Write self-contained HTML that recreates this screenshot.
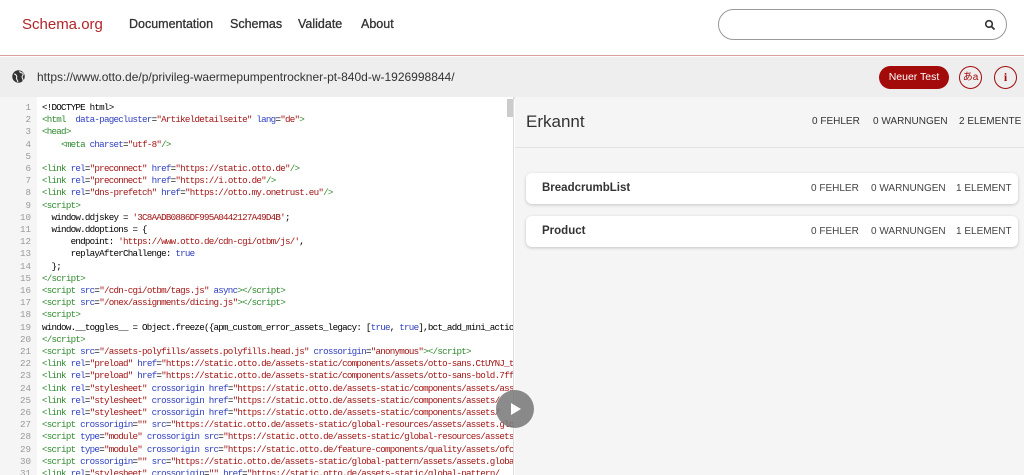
<!DOCTYPE html>
<html><head><style>
*{margin:0;padding:0;box-sizing:border-box}
body{width:1024px;height:475px;overflow:hidden;font-family:"Liberation Sans",sans-serif;background:#fff;position:relative}
.hdr{position:absolute;left:0;top:0;width:1024px;height:56px;background:#fff;border-bottom:1.5px solid #d9a0a0}
.logo{position:absolute;left:22px;top:16px;font-size:15px;color:#b1242a}
.nav{position:absolute;top:17px;font-size:12.5px;color:#333;-webkit-text-stroke:0.3px #333}
.search{position:absolute;left:718px;top:9px;width:289px;height:31px;border:1px solid #999;border-radius:16px}
.urlbar{position:absolute;left:0;top:57px;width:1024px;height:40px;background:#eeeeee;box-shadow:0 2px 3px rgba(0,0,0,.15)}
.url{position:absolute;left:37px;top:13px;font-size:12px;color:#333}
.btn{position:absolute;left:879px;top:66px;width:70px;height:23px;border-radius:12px;background:#a30b0b;color:#fff;font-size:10.5px;text-align:center;line-height:23px}
.circ{position:absolute;top:66px;width:23px;height:23px;border:1.3px solid #a30b0b;border-radius:50%;color:#a30b0b;font-size:10px;text-align:center;line-height:21px}
.code{position:absolute;left:0;top:97px;width:514px;height:378px;background:#fff;overflow:hidden;border-right:1px solid #ddd}
.gut{position:absolute;left:0;top:0;width:37px;height:378px;background:#f5f5f5}
.lines{position:absolute;left:0;top:5px;font-family:"Liberation Mono",monospace;font-size:9.2px;letter-spacing:-0.75px;line-height:12.2px;white-space:pre}
.ln{display:inline-block;width:31px;text-align:right;color:#999;margin-right:11px;letter-spacing:0}
.t{color:#2f8a2f}.a{color:#3040c0}.s{color:#a31515}.k{color:#3040c0}
.sb{position:absolute;left:507px;top:2px;width:6px;height:18px;background:#ccc}
.play{position:absolute;left:496px;top:390px;width:38px;height:38px;border-radius:50%;background:#777;opacity:.85}
.right{position:absolute;left:515px;top:97px;width:509px;height:378px;background:#f5f5f5}
.rh{position:absolute;left:0;top:0;width:509px;height:51px;border-bottom:1px solid #e2e2e2}
.card{position:absolute;left:11px;width:492px;height:31px;background:#fff;border-radius:6px;box-shadow:0 1px 3px rgba(0,0,0,.2)}
.ct{position:absolute;left:16px;top:9px;font-size:11.5px;font-weight:bold;color:#333}
.st{position:absolute;top:10px;font-size:10px;color:#444}
</style></head><body>
<div class="hdr">
<div class="logo">Schema.org</div>
<div class="nav" style="left:129px">Documentation</div>
<div class="nav" style="left:230px">Schemas</div>
<div class="nav" style="left:298px">Validate</div>
<div class="nav" style="left:361px">About</div>
<div class="search"><svg style="position:absolute;left:265px;top:9px" width="12" height="12" viewBox="0 0 12 12"><circle cx="5" cy="5" r="3.3" fill="none" stroke="#333" stroke-width="1.6"/><path d="M7.5 7.5L10.5 10.5" stroke="#333" stroke-width="1.8"/></svg></div>
</div>
<div class="urlbar">
<svg style="position:absolute;left:11px;top:12px" width="15" height="15" viewBox="0 0 24 24"><circle cx="12" cy="12" r="10" fill="#333"/><path d="M5 8c2 0 3 1 4 3s-1 3 0 5 2 3 2 5M14 3c0 2 1 3 3 3s3 2 2 4-2 2-1 4 2 3 1 5" fill="none" stroke="#eee" stroke-width="1.8"/></svg>
<div class="url">https://www.otto.de/p/privileg-waermepumpentrockner-pt-840d-w-1926998844/</div>
</div>
<div class="btn">Neuer Test</div>
<div class="circ" style="left:959px">あa</div>
<div class="circ" style="left:994px;font-weight:bold;font-family:'Liberation Serif',serif;font-size:12px">i</div>
<div class="code"><div class="gut"></div><div class="sb"></div>
<div class="lines"><span class="ln">1</span>&lt;!DOCTYPE html&gt;
<span class="ln">2</span><span class="t">&lt;html</span>  <span class="a">data-pagecluster</span>=<span class="s">"Artikeldetailseite"</span> <span class="a">lang</span>=<span class="s">"de"</span><span class="t">&gt;</span>
<span class="ln">3</span><span class="t">&lt;head&gt;</span>
<span class="ln">4</span>    <span class="t">&lt;meta</span> <span class="a">charset</span>=<span class="s">"utf-8"</span><span class="t">/&gt;</span>
<span class="ln">5</span>
<span class="ln">6</span><span class="t">&lt;link</span> <span class="a">rel</span>=<span class="s">"preconnect"</span> <span class="a">href</span>=<span class="s">"https://static.otto.de"</span><span class="t">/&gt;</span>
<span class="ln">7</span><span class="t">&lt;link</span> <span class="a">rel</span>=<span class="s">"preconnect"</span> <span class="a">href</span>=<span class="s">"https://i.otto.de"</span><span class="t">/&gt;</span>
<span class="ln">8</span><span class="t">&lt;link</span> <span class="a">rel</span>=<span class="s">"dns-prefetch"</span> <span class="a">href</span>=<span class="s">"https://otto.my.onetrust.eu"</span><span class="t">/&gt;</span>
<span class="ln">9</span><span class="t">&lt;script&gt;</span>
<span class="ln">10</span>  window.ddjskey = <span class="s">'3C8AADB0886DF995A0442127A49D4B'</span>;
<span class="ln">11</span>  window.ddoptions = {
<span class="ln">12</span>      endpoint: <span class="s">'https://www.otto.de/cdn-cgi/otbm/js/'</span>,
<span class="ln">13</span>      replayAfterChallenge: <span class="k">true</span>
<span class="ln">14</span>  };
<span class="ln">15</span><span class="t">&lt;/script&gt;</span>
<span class="ln">16</span><span class="t">&lt;script</span> <span class="a">src</span>=<span class="s">"/cdn-cgi/otbm/tags.js"</span> <span class="a">async</span><span class="t">&gt;&lt;/script&gt;</span>
<span class="ln">17</span><span class="t">&lt;script</span> <span class="a">src</span>=<span class="s">"/onex/assignments/dicing.js"</span><span class="t">&gt;&lt;/script&gt;</span>
<span class="ln">18</span><span class="t">&lt;script&gt;</span>
<span class="ln">19</span>window.__toggles__ = Object.freeze({apm_custom_error_assets_legacy: [<span class="k">true</span>, <span class="k">true</span>],bct_add_mini_action
<span class="ln">20</span><span class="t">&lt;/script&gt;</span>
<span class="ln">21</span><span class="t">&lt;script</span> <span class="a">src</span>=<span class="s">"/assets-polyfills/assets.polyfills.head.js"</span> <span class="a">crossorigin</span>=<span class="s">"anonymous"</span><span class="t">&gt;&lt;/script&gt;</span>
<span class="ln">22</span><span class="t">&lt;link</span> <span class="a">rel</span>=<span class="s">"preload"</span> <span class="a">href</span>=<span class="s">"https://static.otto.de/assets-static/components/assets/otto-sans.CtUYNJ_t</span>
<span class="ln">23</span><span class="t">&lt;link</span> <span class="a">rel</span>=<span class="s">"preload"</span> <span class="a">href</span>=<span class="s">"https://static.otto.de/assets-static/components/assets/otto-sans-bold.7ff</span>
<span class="ln">24</span><span class="t">&lt;link</span> <span class="a">rel</span>=<span class="s">"stylesheet"</span> <span class="a">crossorigin</span> <span class="a">href</span>=<span class="s">"https://static.otto.de/assets-static/components/assets/ass</span>
<span class="ln">25</span><span class="t">&lt;link</span> <span class="a">rel</span>=<span class="s">"stylesheet"</span> <span class="a">crossorigin</span> <span class="a">href</span>=<span class="s">"https://static.otto.de/assets-static/components/assets/</span>
<span class="ln">26</span><span class="t">&lt;link</span> <span class="a">rel</span>=<span class="s">"stylesheet"</span> <span class="a">crossorigin</span> <span class="a">href</span>=<span class="s">"https://static.otto.de/assets-static/components/assets/</span>
<span class="ln">27</span><span class="t">&lt;script</span> <span class="a">crossorigin</span>=<span class="s">""</span> <span class="a">src</span>=<span class="s">"https://static.otto.de/assets-static/global-resources/assets/assets.glo</span>
<span class="ln">28</span><span class="t">&lt;script</span> <span class="a">type</span>=<span class="s">"module"</span> <span class="a">crossorigin</span> <span class="a">src</span>=<span class="s">"https://static.otto.de/assets-static/global-resources/assets</span>
<span class="ln">29</span><span class="t">&lt;script</span> <span class="a">type</span>=<span class="s">"module"</span> <span class="a">crossorigin</span> <span class="a">src</span>=<span class="s">"https://static.otto.de/feature-components/quality/assets/ofc</span>
<span class="ln">30</span><span class="t">&lt;script</span> <span class="a">crossorigin</span>=<span class="s">""</span> <span class="a">src</span>=<span class="s">"https://static.otto.de/assets-static/global-pattern/assets/assets.globa</span>
<span class="ln">31</span><span class="t">&lt;link</span> <span class="a">rel</span>=<span class="s">"stylesheet"</span> <span class="a">crossorigin</span>=<span class="s">""</span> <span class="a">href</span>=<span class="s">"https://static.otto.de/assets-static/global-pattern/</span>
</div></div>
<div class="right">
<div class="rh">
<div style="position:absolute;left:11px;top:15px;font-size:17px;color:#333">Erkannt</div>
<div class="st" style="left:297px;top:19px;color:#333">0 FEHLER</div>
<div class="st" style="left:358px;top:19px;color:#333">0 WARNUNGEN</div>
<div class="st" style="left:444px;top:19px;color:#333">2 ELEMENTE</div>
</div>
<div class="card" style="top:76px"><div class="ct">BreadcrumbList</div><div class="st" style="left:285px">0 FEHLER</div><div class="st" style="left:345px">0 WARNUNGEN</div><div class="st" style="left:430px">1 ELEMENT</div></div>
<div class="card" style="top:119px"><div class="ct">Product</div><div class="st" style="left:285px">0 FEHLER</div><div class="st" style="left:345px">0 WARNUNGEN</div><div class="st" style="left:430px">1 ELEMENT</div></div>
</div>
<div class="play"><svg style="position:absolute;left:14px;top:12px" width="12" height="14" viewBox="0 0 12 14"><path d="M1 1L11 7L1 13Z" fill="#fff"/></svg></div>
</body></html>
